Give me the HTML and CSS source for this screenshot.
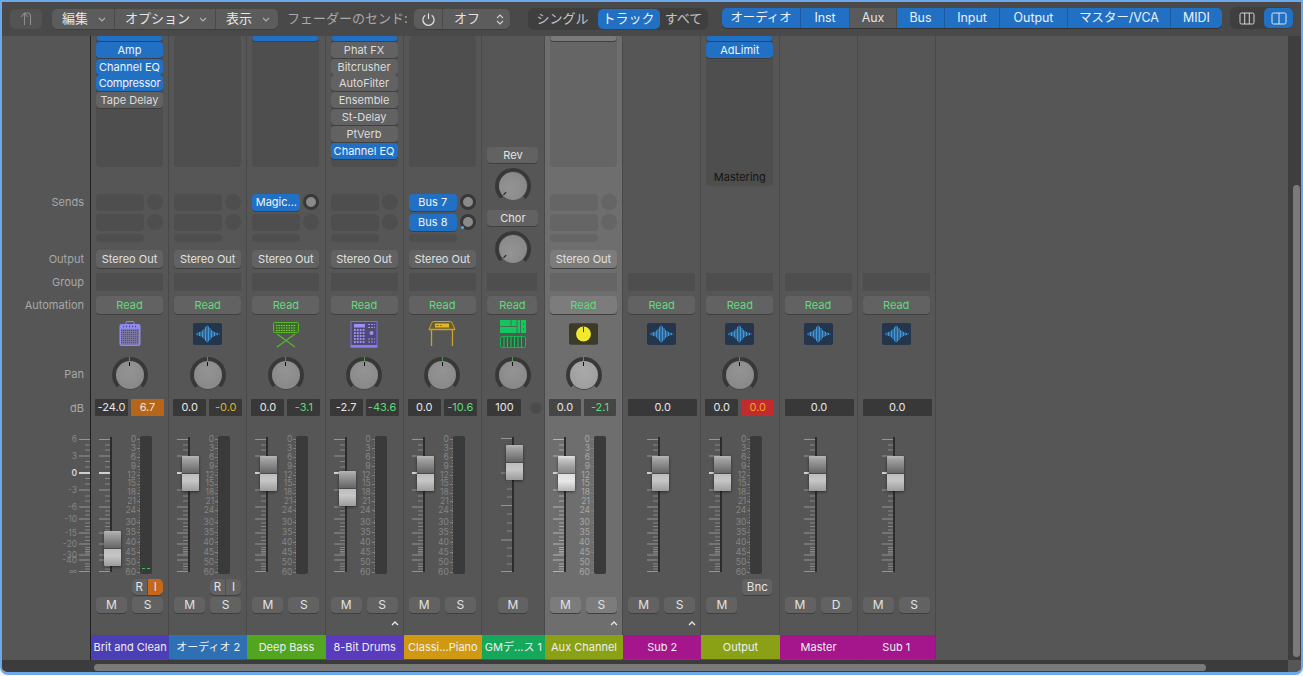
FILE: index.html
```html
<!DOCTYPE html>
<html lang="ja">
<head>
<meta charset="utf-8">
<title>Mixer</title>
<link rel="stylesheet" href="styles.css">
</head>
<body>
<svg class="defs" width="0" height="0" aria-hidden="true">
  <symbol id="ticks" viewBox="0 0 11 148">
    <path d="M0 10.5H11M0 27H11M0 61H11M0 78H11M0 90H11M0 104H11M0 115H11M0 126H11M0 131H11M0 142.5H11" stroke="currentColor" stroke-width="1" fill="none"/>
    <path d="M6 16H11M6 21H11M6 32.5H11M6 38H11M6 49.5H11M6 55H11M6 67H11M6 72H11M6 82H11M6 86H11M6 94H11M6 97.5H11M6 101H11M6 108H11M6 111.5H11M6 118.5H11M6 120.5H11M6 122.5H11M6 124H11M6 135H11M6 137.5H11M6 140H11" stroke="currentColor" stroke-width="1" fill="none" opacity=".8"/>
    <path d="M0 44H11" stroke="#cfcfcf" stroke-width="2"/>
  </symbol>
  <symbol id="ticks-lin" viewBox="0 0 11 148">
    <path d="M0 9.500H11M0 44H11M0 76.500H11M0 111H11M0 142.500H11" stroke="currentColor" stroke-width="1" fill="none"/>
    <path d="M6 18H11M6 27H11M6 35H11M6 52H11M6 60H11M6 68H11M6 85H11M6 94H11M6 102H11M6 119H11M6 127H11M6 135H11" stroke="currentColor" stroke-width="1" fill="none" opacity=".8"/>
  </symbol>
  <symbol id="wave" viewBox="0 0 29 22">
    <rect width="29" height="22" rx="2" fill="#24364d"/>
    <path d="M3.500 10.500v1M5 9.500v3M6.500 9v4M8 8.500v5M9.500 7.500v7M11 6v10M12.500 4v14M14 2.500v17M15.500 3.500v15M17 5v12M18.500 7v8M20 8v6M21.500 9v4M23 9.500v3M24.500 10v2M26 10.500v1" stroke="#3f97dc" stroke-width="1" fill="none"/>
  </symbol>
  <symbol id="chev" viewBox="0 0 8 5">
    <path d="M1 4L4 1L7 4" stroke="currentColor" stroke-width="1.300" fill="none"/>
  </symbol>
  <symbol id="down" viewBox="0 0 8 5">
    <path d="M1 1L4 4L7 1" stroke="currentColor" stroke-width="1.100" fill="none"/>
  </symbol>
</svg>

<div class="window">
  <header class="toolbar">
    <button class="tb-back"><svg width="14" height="16" viewBox="0 0 14 16"><path d="M2 6L5.500 2L9 6M5.500 2V14M5.500 2H8.500Q11.500 2 11.500 5V14" stroke="#8c8c8c" stroke-width="1.100" fill="none"/></svg></button>
    <nav class="menus">
      <div class="menu"><span>編集</span><svg class="caret"><use href="#down"/></svg></div>
      <div class="menu"><span>オプション</span><svg class="caret"><use href="#down"/></svg></div>
      <div class="menu"><span>表示</span><svg class="caret"><use href="#down"/></svg></div>
    </nav>
    <span class="send-label">フェーダーのセンド:</span>
    <div class="power">
      <div class="power-btn"><svg width="15" height="15" viewBox="0 0 15 15"><path d="M7.500 1.500V7M4.300 3.200A5.600 5.600 0 1 0 10.700 3.200" stroke="#e2e2e2" stroke-width="1.200" fill="none"/></svg></div>
      <div class="power-val"><span>オフ</span><svg width="8" height="13" viewBox="0 0 8 13"><path d="M1 5L4 2L7 5M1 8L4 11L7 8" stroke="#cfcfcf" stroke-width="1.100" fill="none"/></svg></div>
    </div>
    <div class="mode">
      <span class="mode-item">シングル</span>
      <span class="mode-item mode-on">トラック</span>
      <span class="mode-item">すべて</span>
    </div>
    <div class="filters">
      <span class="filter">オーディオ</span>
      <span class="filter">Inst</span>
      <span class="filter filter-off">Aux</span>
      <span class="filter">Bus</span>
      <span class="filter">Input</span>
      <span class="filter">Output</span>
      <span class="filter">マスター/VCA</span>
      <span class="filter">MIDI</span>
    </div>
    <div class="views">
      <div class="view"><svg width="16" height="13" viewBox="0 0 16 13"><path d="M2.500 1H13.500Q15 1 15 2.500V10.500Q15 12 13.500 12H2.500Q1 12 1 10.500V2.500Q1 1 2.500 1ZM5.700 1V12M10.300 1V12" stroke="#d6d6d6" fill="none"/></svg></div>
      <div class="view view-on"><svg width="16" height="13" viewBox="0 0 16 13"><path d="M2.500 1H13.500Q15 1 15 2.500V10.500Q15 12 13.500 12H2.500Q1 12 1 10.500V2.500Q1 1 2.500 1ZM8 1V12" stroke="#e6e6e6" fill="none"/></svg></div>
    </div>
  </header>

  <div class="body">
    <div class="left">
      <main class="mixer">
        <aside class="labels">
          <div class="sec-ins"></div>
          <div class="sec-sends lab lab-first">Sends</div>
          <div class="sec-out lab">Output</div>
          <div class="sec-grp lab">Group</div>
          <div class="sec-auto lab">Automation</div>
          <div class="sec-icon"></div>
          <div class="sec-pan lab lab-pan">Pan</div>
          <div class="sec-db lab lab-db">dB</div>
          <div class="sec-fader master-scale">
            <div class="mscale"><span>6</span><span>3</span><span class="bright">0</span><span>-3</span><span>-6</span><span>-10</span><span>-15</span><span>-20</span><span>-30</span><span>-40</span><span>∞</span></div>
            <svg class="ticks"><use href="#ticks"/></svg>
          </div>
        </aside>

        <!-- 1 -->
        <section class="strip">
          <div class="sec-ins"><div class="panel"><div class="plugs">
            <div class="plug on"></div><div class="plug on">Amp</div><div class="plug on">Channel EQ</div><div class="plug on tight">Compressor</div><div class="plug">Tape Delay</div>
          </div></div></div>
          <div class="sec-sends"><div class="send"><i class="slot"></i><i class="dot"></i></div><div class="send"><i class="slot"></i><i class="dot"></i></div><div class="send send-cut"><i class="slot"></i></div></div>
          <div class="sec-out"><div class="btn">Stereo Out</div></div>
          <div class="sec-grp"><div class="group"></div></div>
          <div class="sec-auto"><div class="btn read">Read</div></div>
          <div class="sec-icon">
            <svg class="icon" viewBox="0 0 30 28"><defs><pattern id="grille" width="2" height="2" patternUnits="userSpaceOnUse"><rect width="2" height="2" fill="#77759a"/><rect width="1" height="1" fill="#55536f"/></pattern></defs><path d="M11 4V2.500Q11 1.500 12 1.500H18Q19 1.500 19 2.500V4" stroke="#8f89f2" fill="none"/><rect x="4.500" y="4" width="21" height="22" rx="2" fill="#8f89f2"/><rect x="6" y="9" width="18" height="15.500" fill="url(#grille)"/><path d="M8 6.500h1M11 6.500h1M14 6.500h1M17 6.500h1M20 6.500h1" stroke="#4c4880" stroke-width="1.500"/></svg>
          </div>
          <div class="sec-pan"><div class="knob"><b></b></div></div>
          <div class="sec-db db-row"><div class="db">-24.0</div><div class="db db-orange">6.7</div></div>
          <div class="sec-fader fsec">
            <div class="fader"><svg class="ticks"><use href="#ticks"/></svg><i class="track"></i><div class="cap cap-low"></div></div>
            <div class="scale"><span>0</span><span>3</span><span>6</span><span>9</span><span>12</span><span>15</span><span>18</span><span>21</span><span>24</span><span>30</span><span>35</span><span>40</span><span>45</span><span>50</span><span>60</span></div>
            <div class="meter meter-sig"></div>
          </div>
          <div class="sec-ri"><div class="ri"><span>R</span><span class="ri-on">I</span></div></div>
          <div class="sec-ms"><div class="btn ms">M</div><div class="btn ms">S</div></div>
          <div class="sec-chev"></div>
          <div class="name n-indigo">Brit and Clean</div>
        </section>

        <!-- 2 -->
        <section class="strip">
          <div class="sec-ins"><div class="panel"></div></div>
          <div class="sec-sends"><div class="send"><i class="slot"></i><i class="dot"></i></div><div class="send"><i class="slot"></i><i class="dot"></i></div><div class="send send-cut"><i class="slot"></i></div></div>
          <div class="sec-out"><div class="btn">Stereo Out</div></div>
          <div class="sec-grp"><div class="group"></div></div>
          <div class="sec-auto"><div class="btn read">Read</div></div>
          <div class="sec-icon"><svg class="icon icon-wave"><use href="#wave"/></svg></div>
          <div class="sec-pan"><div class="knob"><b></b></div></div>
          <div class="sec-db db-row"><div class="db">0.0</div><div class="db db-yellow">-0.0</div></div>
          <div class="sec-fader fsec">
            <div class="fader"><svg class="ticks"><use href="#ticks"/></svg><i class="track"></i><div class="cap"></div></div>
            <div class="scale"><span>0</span><span>3</span><span>6</span><span>9</span><span>12</span><span>15</span><span>18</span><span>21</span><span>24</span><span>30</span><span>35</span><span>40</span><span>45</span><span>50</span><span>60</span></div>
            <div class="meter"></div>
          </div>
          <div class="sec-ri"><div class="ri"><span>R</span><span>I</span></div></div>
          <div class="sec-ms"><div class="btn ms">M</div><div class="btn ms">S</div></div>
          <div class="sec-chev"></div>
          <div class="name n-blue">オーディオ 2</div>
        </section>

        <!-- 3 -->
        <section class="strip">
          <div class="sec-ins"><div class="panel"><div class="plugs"><div class="plug on"></div></div></div></div>
          <div class="sec-sends"><div class="send"><i class="slot slot-on">Magic...</i><i class="dot dot-on"></i></div><div class="send"><i class="slot"></i><i class="dot"></i></div><div class="send send-cut"><i class="slot"></i></div></div>
          <div class="sec-out"><div class="btn">Stereo Out</div></div>
          <div class="sec-grp"><div class="group"></div></div>
          <div class="sec-auto"><div class="btn read">Read</div></div>
          <div class="sec-icon">
            <svg class="icon" viewBox="0 0 30 28"><rect x="2.500" y="2.500" width="25" height="10" rx="1" stroke="#58b52c" fill="#3f6e2a"/><path d="M5 5.500h20M5 8h20M5 10.500h20" stroke="#7cc850" stroke-dasharray="1.500 1"/><path d="M6 14L24 27M24 14L6 27" stroke="#58b52c" stroke-width="1.300"/></svg>
          </div>
          <div class="sec-pan"><div class="knob"><b></b></div></div>
          <div class="sec-db db-row"><div class="db">0.0</div><div class="db db-green">-3.1</div></div>
          <div class="sec-fader fsec">
            <div class="fader"><svg class="ticks"><use href="#ticks"/></svg><i class="track"></i><div class="cap"></div></div>
            <div class="scale"><span>0</span><span>3</span><span>6</span><span>9</span><span>12</span><span>15</span><span>18</span><span>21</span><span>24</span><span>30</span><span>35</span><span>40</span><span>45</span><span>50</span><span>60</span></div>
            <div class="meter"></div>
          </div>
          <div class="sec-ri"></div>
          <div class="sec-ms"><div class="btn ms">M</div><div class="btn ms">S</div></div>
          <div class="sec-chev"></div>
          <div class="name n-green">Deep Bass</div>
        </section>

        <!-- 4 -->
        <section class="strip">
          <div class="sec-ins"><div class="panel"><div class="plugs">
            <div class="plug on"></div><div class="plug">Phat FX</div><div class="plug">Bitcrusher</div><div class="plug">AutoFilter</div><div class="plug">Ensemble</div><div class="plug">St-Delay</div><div class="plug">PtVerb</div><div class="plug on">Channel EQ</div>
          </div></div></div>
          <div class="sec-sends"><div class="send"><i class="slot"></i><i class="dot"></i></div><div class="send"><i class="slot"></i><i class="dot"></i></div><div class="send send-cut"><i class="slot"></i></div></div>
          <div class="sec-out"><div class="btn">Stereo Out</div></div>
          <div class="sec-grp"><div class="group"></div></div>
          <div class="sec-auto"><div class="btn read">Read</div></div>
          <div class="sec-icon">
            <svg class="icon" viewBox="0 0 30 28"><rect x="2" y="1.500" width="26" height="25.500" fill="#4f4a72" stroke="#7d6fe0"/><rect x="2" y="25" width="26" height="2.500" fill="#8b7cf0"/><rect x="5" y="4" width="11" height="3.500" fill="#9d90f5"/><path d="M5 10h11M5 13h11M5 16h11M5 19h11M5 22h11" stroke="#9d90f5" stroke-width="1.800" stroke-dasharray="1.800 1.100"/><circle cx="22.500" cy="13" r="2" fill="#9d90f5"/><path d="M19 4.500h7M19 7.500h7M19 19h7M19 22h7" stroke="#9d90f5" stroke-dasharray="2 1"/></svg>
          </div>
          <div class="sec-pan"><div class="knob"><b></b></div></div>
          <div class="sec-db db-row"><div class="db">-2.7</div><div class="db db-green">-43.6</div></div>
          <div class="sec-fader fsec">
            <div class="fader"><svg class="ticks"><use href="#ticks"/></svg><i class="track"></i><div class="cap cap-mid"></div></div>
            <div class="scale"><span>0</span><span>3</span><span>6</span><span>9</span><span>12</span><span>15</span><span>18</span><span>21</span><span>24</span><span>30</span><span>35</span><span>40</span><span>45</span><span>50</span><span>60</span></div>
            <div class="meter"></div>
          </div>
          <div class="sec-ri"></div>
          <div class="sec-ms"><div class="btn ms">M</div><div class="btn ms">S</div></div>
          <div class="sec-chev"><svg class="chev"><use href="#chev"/></svg></div>
          <div class="name n-violet">8-Bit Drums</div>
        </section>

        <!-- 5 -->
        <section class="strip">
          <div class="sec-ins"><div class="panel"></div></div>
          <div class="sec-sends"><div class="send"><i class="slot slot-on">Bus 7</i><i class="dot dot-on"></i></div><div class="send"><i class="slot slot-on">Bus 8</i><i class="dot dot-on dot-mark"></i></div><div class="send send-cut"><i class="slot"></i></div></div>
          <div class="sec-out"><div class="btn">Stereo Out</div></div>
          <div class="sec-grp"><div class="group"></div></div>
          <div class="sec-auto"><div class="btn read">Read</div></div>
          <div class="sec-icon">
            <svg class="icon" viewBox="0 0 30 28"><path d="M4.500 3.500Q5 1.500 7 1.500H23Q25 1.500 25.500 3.500L28 9.500H2Z" fill="#6a5f2e" stroke="#c9a227"/><path d="M2 9.500H28" stroke="#c9a227" stroke-width="1.500"/><rect x="8" y="3.500" width="14" height="4" fill="#e3b52b"/><path d="M9.500 5.500h2M13 5.500h1.500" stroke="#6a5f2e"/><path d="M4.500 10V26M25.500 10V26" stroke="#c9a227" stroke-width="1.300"/></svg>
          </div>
          <div class="sec-pan"><div class="knob"><b></b></div></div>
          <div class="sec-db db-row"><div class="db">0.0</div><div class="db db-green">-10.6</div></div>
          <div class="sec-fader fsec">
            <div class="fader"><svg class="ticks"><use href="#ticks"/></svg><i class="track"></i><div class="cap"></div></div>
            <div class="scale"><span>0</span><span>3</span><span>6</span><span>9</span><span>12</span><span>15</span><span>18</span><span>21</span><span>24</span><span>30</span><span>35</span><span>40</span><span>45</span><span>50</span><span>60</span></div>
            <div class="meter"></div>
          </div>
          <div class="sec-ri"></div>
          <div class="sec-ms"><div class="btn ms">M</div><div class="btn ms">S</div></div>
          <div class="sec-chev"></div>
          <div class="name n-amber">Classi...Piano</div>
        </section>

        <!-- 6 -->
        <section class="strip strip-gm">
          <div class="gm-sends">
            <div class="btn">Rev</div>
            <div class="knob knob-min"><b></b></div>
            <div class="btn">Chor</div>
            <div class="knob knob-min"><b></b></div>
          </div>
          <div class="sec-grp"><div class="group"></div></div>
          <div class="sec-auto"><div class="btn read">Read</div></div>
          <div class="sec-icon">
            <svg class="icon" viewBox="0 0 30 28"><rect x="2" y="0" width="26" height="13" fill="#12c85c"/><path d="M2 6.500H19M13 0V6.500M19 0V13M22.500 0V13M25.500 3V4.500M25.500 8V9.500" stroke="#4b6b55" stroke-width="1"/><rect x="2.500" y="16.500" width="25" height="11" rx="1.500" fill="#3b5a46" stroke="#12b554"/><path d="M6 17V27M9.500 17V27M13 17V27M16.500 17V27M20 17V27M23.500 17V27" stroke="#17c15b" stroke-width="1.100"/></svg>
          </div>
          <div class="sec-pan"><div class="knob"><b></b></div></div>
          <div class="sec-db db-row"><div class="db">100</div><i class="db-led"></i></div>
          <div class="sec-fader fsec fsec-gm">
            <div class="fader"><svg class="ticks"><use href="#ticks-lin"/></svg><i class="track"></i><div class="cap cap-high"></div></div>
          </div>
          <div class="sec-ri"></div>
          <div class="sec-ms"><div class="btn ms ms-gm">M</div></div>
          <div class="sec-chev"></div>
          <div class="name n-emerald">GMデ...ス 1</div>
        </section>

        <!-- 7 -->
        <section class="strip strip-sel">
          <div class="sec-ins"><div class="panel"><div class="plugs"><div class="plug"></div></div></div></div>
          <div class="sec-sends"><div class="send"><i class="slot"></i><i class="dot"></i></div><div class="send"><i class="slot"></i><i class="dot"></i></div><div class="send send-cut"><i class="slot"></i></div></div>
          <div class="sec-out"><div class="btn">Stereo Out</div></div>
          <div class="sec-grp"><div class="group"></div></div>
          <div class="sec-auto"><div class="btn read">Read</div></div>
          <div class="sec-icon">
            <svg class="icon icon-wave" viewBox="0 0 30 22"><rect width="30" height="22" rx="2" fill="#3b3b27"/><circle cx="15" cy="11" r="7.700" fill="#f0e92f"/><path d="M15 3.500V9" stroke="#333" stroke-width="1"/></svg>
          </div>
          <div class="sec-pan"><div class="knob"><b></b></div></div>
          <div class="sec-db db-row"><div class="db">0.0</div><div class="db db-green">-2.1</div></div>
          <div class="sec-fader fsec">
            <div class="fader"><svg class="ticks"><use href="#ticks"/></svg><i class="track"></i><div class="cap"></div></div>
            <div class="scale"><span>0</span><span>3</span><span>6</span><span>9</span><span>12</span><span>15</span><span>18</span><span>21</span><span>24</span><span>30</span><span>35</span><span>40</span><span>45</span><span>50</span><span>60</span></div>
            <div class="meter"></div>
          </div>
          <div class="sec-ri"></div>
          <div class="sec-ms"><div class="btn ms">M</div><div class="btn ms">S</div></div>
          <div class="sec-chev"><svg class="chev"><use href="#chev"/></svg></div>
          <div class="name n-olive">Aux Channel</div>
        </section>

        <!-- 8 -->
        <section class="strip">
          <div class="sec-ins"></div>
          <div class="sec-sends"></div>
          <div class="sec-out"></div>
          <div class="sec-grp"><div class="group"></div></div>
          <div class="sec-auto"><div class="btn read">Read</div></div>
          <div class="sec-icon"><svg class="icon icon-wave"><use href="#wave"/></svg></div>
          <div class="sec-pan"></div>
          <div class="sec-db db-row"><div class="db db-wide">0.0</div></div>
          <div class="sec-fader fsec fsec-solo">
            <div class="fader"><svg class="ticks"><use href="#ticks"/></svg><i class="track"></i><div class="cap"></div></div>
          </div>
          <div class="sec-ri"></div>
          <div class="sec-ms"><div class="btn ms">M</div><div class="btn ms">S</div></div>
          <div class="sec-chev"><svg class="chev"><use href="#chev"/></svg></div>
          <div class="name n-magenta">Sub 2</div>
        </section>

        <!-- 9 -->
        <section class="strip">
          <div class="sec-ins"><div class="panel panel-long"><div class="plugs"><div class="plug on"></div><div class="plug on">AdLimit</div></div><span class="mastering">Mastering</span></div></div>
          <div class="sec-sends"></div>
          <div class="sec-out"></div>
          <div class="sec-grp"><div class="group"></div></div>
          <div class="sec-auto"><div class="btn read">Read</div></div>
          <div class="sec-icon"><svg class="icon icon-wave"><use href="#wave"/></svg></div>
          <div class="sec-pan"><div class="knob"><b></b></div></div>
          <div class="sec-db db-row"><div class="db">0.0</div><div class="db db-red">0.0</div></div>
          <div class="sec-fader fsec">
            <div class="fader"><svg class="ticks"><use href="#ticks"/></svg><i class="track"></i><div class="cap"></div></div>
            <div class="scale"><span>0</span><span>3</span><span>6</span><span>9</span><span>12</span><span>15</span><span>18</span><span>21</span><span>24</span><span>30</span><span>35</span><span>40</span><span>45</span><span>50</span><span>60</span></div>
            <div class="meter"></div>
          </div>
          <div class="sec-ri sec-bnc"><div class="btn bnc">Bnc</div></div>
          <div class="sec-ms"><div class="btn ms">M</div></div>
          <div class="sec-chev"></div>
          <div class="name n-olive">Output</div>
        </section>

        <!-- 10 -->
        <section class="strip">
          <div class="sec-ins"></div>
          <div class="sec-sends"></div>
          <div class="sec-out"></div>
          <div class="sec-grp"><div class="group"></div></div>
          <div class="sec-auto"><div class="btn read">Read</div></div>
          <div class="sec-icon"><svg class="icon icon-wave"><use href="#wave"/></svg></div>
          <div class="sec-pan"></div>
          <div class="sec-db db-row"><div class="db db-wide">0.0</div></div>
          <div class="sec-fader fsec fsec-solo">
            <div class="fader"><svg class="ticks"><use href="#ticks"/></svg><i class="track"></i><div class="cap"></div></div>
          </div>
          <div class="sec-ri"></div>
          <div class="sec-ms"><div class="btn ms">M</div><div class="btn ms">D</div></div>
          <div class="sec-chev"></div>
          <div class="name n-magenta">Master</div>
        </section>

        <!-- 11 -->
        <section class="strip">
          <div class="sec-ins"></div>
          <div class="sec-sends"></div>
          <div class="sec-out"></div>
          <div class="sec-grp"><div class="group"></div></div>
          <div class="sec-auto"><div class="btn read">Read</div></div>
          <div class="sec-icon"><svg class="icon icon-wave"><use href="#wave"/></svg></div>
          <div class="sec-pan"></div>
          <div class="sec-db db-row"><div class="db db-wide">0.0</div></div>
          <div class="sec-fader fsec fsec-solo">
            <div class="fader"><svg class="ticks"><use href="#ticks"/></svg><i class="track"></i><div class="cap"></div></div>
          </div>
          <div class="sec-ri"></div>
          <div class="sec-ms"><div class="btn ms">M</div><div class="btn ms">S</div></div>
          <div class="sec-chev"></div>
          <div class="name n-magenta">Sub 1</div>
        </section>
      </main>
      <div class="hscroll"><div class="hthumb"></div></div>
    </div>
    <div class="vscroll"><div class="vtrack"><div class="vthumb"></div></div><div class="corner"></div></div>
  </div>
</div>
</body>
</html>
```
FILE: styles.css
```css
* { box-sizing: border-box; }
html, body { margin: 0; padding: 0; background: #f4f6f8; overflow: hidden; }
body { width: 1303px; height: 676px; font-family: Inter, "Noto Sans CJK JP", sans-serif; color: #e2e2e2; }
.defs { position: absolute; }
button { font: inherit; color: inherit; padding: 0; border: 0; }

.window {
  width: 1303px; height: 675px;
  border: solid #6ca8ea; border-width: 2px 2px 3px 2px;
  border-radius: 0 0 8px 8px;
  background: #4a4a4a;
  display: flex; flex-direction: column;
  overflow: hidden;
}

/* toolbar */
.toolbar {
  height: 34px; flex: none; background: #494949;
  display: flex; align-items: center; padding-left: 8px;
  font-family: "Noto Sans CJK JP", Inter, sans-serif;
  font-size: 13px;
}
.tb-back { width: 32px; height: 20px; background: #535353; border-radius: 5px; display: flex; align-items: center; justify-content: center; }
.menus { margin-left: 10px; width: 226px; height: 20px; display: grid; grid-template-columns: 63px 101px 62px; background: #5c5c5c; border-radius: 5px; box-shadow: 0 1px 0 #3d3d3d; }
.menu { display: flex; align-items: center; justify-content: space-between; padding: 0 8px 0 10px; border-right: 1px solid #4a4a4a; color: #e6e6e6; }
.menu span, .power-val span { line-height: 18px; margin-top: -3px; }
.menu:last-child { border-right: 0; }
.caret { width: 8px; height: 5px; color: #b0b0b0; }
.send-label { margin: -3px 0 0 9px; width: 123px; color: #a9a9a9; font-size: 13px; white-space: nowrap; }
.power { margin-left: 4px; width: 96px; height: 20px; display: grid; grid-template-columns: 29px 67px; background: #5c5c5c; border-radius: 5px; box-shadow: 0 1px 0 #3d3d3d; }
.power-btn { display: flex; align-items: center; justify-content: center; border-right: 1px solid #4a4a4a; }
.power-val { display: flex; align-items: center; justify-content: space-between; padding: 0 6px 0 11px; }
.mode { margin-left: 17.5px; width: 180px; height: 22px; background: #3f3f3f; border-radius: 6px; display: grid; grid-template-columns: 70px 62px 48px; align-items: center; justify-items: center; color: #c4c4c4; font-size: 13px; }
.mode-item { height: 20px; line-height: 17px; white-space: nowrap; }
.mode-on { width: 62px; background: #2270c4; color: #f0f0f0; border-radius: 5px; text-align: center; }
.filters { margin: 0 0 2px 14.5px; width: 500px; height: 20px; display: grid; grid-template-columns: 79px 49px 47px 48px 55px 68px 103px 51px; background: #2270c4; border-radius: 5px; box-shadow: 0 1px 0 #333; font-size: 12.4px; }
.filter { display: flex; align-items: center; justify-content: center; padding-bottom: 2px; border-right: 1px solid #1c5ba2; color: #eef2f6; white-space: nowrap; font-family: Inter, "Noto Sans CJK JP", sans-serif; }
.filter:last-child { border-right: 0; }
.filter-off { background: #5a5a5a; color: #e2e2e2; border-right-color: #4a4a4a; }
.views { margin: 0 0 2px 8px; width: 63px; height: 22px; background: #3f3f3f; border-radius: 6px; display: grid; grid-template-columns: 34px 29px; }
.view { display: flex; align-items: center; justify-content: center; }
.view-on { background: #2270c4; border-radius: 5px; margin: 1px 0; }

/* frame */
.body { flex: 1; display: flex; min-height: 0; }
.left { width: 1286px; display: flex; flex-direction: column; }
.mixer { height: 624px; display: flex; background: #565656; overflow: hidden; }
.hscroll { height: 12px; background: #3c3c3c; padding: 4px 0 1px 92px; }
.hthumb { width: 1112px; height: 7px; border-radius: 4px; background: #7a7a7a; }
.vscroll { width: 13px; display: flex; flex-direction: column; }
.vtrack { height: 624px; background: #3e3e3e; padding: 149px 1px 3px 5px; }
.vthumb { height: 472px; border-radius: 4px; background: #7a7a7a; }
.corner { height: 12px; background: #565656; }

/* rows */
.sec-ins { height: 158px; flex: none; }
.sec-sends { height: 56px; flex: none; }
.sec-out, .sec-grp, .sec-auto { height: 23px; flex: none; }
.sec-icon { height: 36px; flex: none; }
.sec-pan { height: 42px; flex: none; padding-top: 2px; }
.sec-db { height: 32px; flex: none; }
.sec-fader { height: 148px; flex: none; }
.sec-ri { height: 20px; flex: none; padding-top: 2px; }
.sec-ms { height: 21px; flex: none; }
.sec-chev { height: 17px; flex: none; }

/* label column */
.labels { width: 89px; flex: none; border-right: 1px solid #1d1d1d; font-size: 11px; color: #a8a8a8; }
.lab { text-align: right; padding-right: 6px; line-height: 18px; }
.lab-first { line-height: 17px; }
.lab-pan { padding-top: 10px; }
.lab-db { padding-top: 2px; }
.master-scale { display: flex; justify-content: flex-end; }
.mscale { width: 77px; padding: 10px 2px 0 0; font-size: 8.500px; color: #858585; }
.mscale span { display: block; height: 17px; line-height: 0; text-align: right; }
.mscale span:nth-child(5) { height: 12px; }
.mscale span:nth-child(6) { height: 14px; }
.mscale span:nth-child(7), .mscale span:nth-child(8) { height: 11px; }
.mscale span:nth-child(9) { height: 5px; }
.mscale span:nth-child(10) { height: 11px; }
.mscale .bright { color: #d8d8d8; font-weight: 600; }
.ticks { width: 11px; height: 148px; flex: none; color: #949494; }

/* strip */
.strip { width: 78.200px; flex: none; display: flex; flex-direction: column; border-right: 1px solid #494949; background: #565656; }
.strip-gm { width: 63px; }
.strip-sel { background: #6e6e6e; }

.panel { margin-left: 5px; width: 67px; height: 131px; background: #4e4e4e; border-radius: 4px; overflow: hidden; position: relative; }
.panel-long { height: 150px; }
.strip-sel .panel { background: #656565; }
.plugs { margin-top: -11px; display: flex; flex-direction: column; gap: .8px; }
.plug { height: 16px; flex: none; background: #626262; border-radius: 4px; box-shadow: 0 1px 0 #3f3f3f; text-align: center; font-size: 11px; line-height: 16px; color: #dcdcdc; white-space: nowrap; }
.plug.on { background: #2270c4; color: #f0f4f8; }
.plug.tight { letter-spacing: -.2px; }
.strip-sel .plug { background: #7a7a7a; }
.mastering { position: absolute; left: 0; right: 0; bottom: 2px; text-align: center; font-size: 11px; color: #141414; }

.send { display: flex; height: 20px; margin-left: 5px; width: 67px; justify-content: space-between; }
.send-cut { height: 16px; }
.slot { width: 48px; height: 17px; background: #4e4e4e; border-radius: 4px; font-style: normal; font-size: 11px; line-height: 17px; text-align: center; color: #f0f4f8; white-space: nowrap; }
.send-cut .slot { height: 8px; }
.dot { width: 16px; height: 16px; background: #4e4e4e; border-radius: 50%; position: relative; }
.slot-on { background: #2270c4; box-shadow: 0 1px 0 #3f3f3f; }
.dot-on { background: #8a8a8a; border: 3px solid #383838; }
.dot-mark::after { content: ""; position: absolute; left: -2px; bottom: -2px; width: 3px; height: 3px; border-radius: 50%; background: #58a4ee; }
.strip-sel .slot, .strip-sel .dot { background: #656565; }

.btn { margin-left: 5px; width: 67px; height: 18px; background: #626262; border-radius: 4px; box-shadow: 0 1px 0 #3f3f3f; text-align: center; font-size: 11px; line-height: 18px; color: #e2e2e2; white-space: nowrap; }
.strip-sel .btn { background: #7c7c7c; }
.read { color: #62da7e; }
.group { margin-left: 5px; width: 67px; height: 18px; background: #4e4e4e; border-radius: 1px; }
.strip-sel .group { background: #656565; }

.icon { display: block; width: 30px; height: 28px; margin: 1px auto 0; }
.icon-wave { width: 29px; height: 22px; margin-top: 4px; }

.knob { width: 36px; height: 36px; margin: 0 auto; border-radius: 50%; background: conic-gradient(from -135deg, #383838 0 270deg, transparent 270deg); display: flex; align-items: center; justify-content: center; position: relative; }
.knob::before { content: ""; position: absolute; left: 17.500px; top: 0; width: 1px; height: 4px; background: #4e9a5e; }
.knob b { display: block; width: 28px; height: 28px; border-radius: 50%; background: radial-gradient(circle at 50% 35%, #949494, #858585); position: relative; box-shadow: 0 1px 0 #4a4a4a; }
.knob b::after { content: ""; position: absolute; left: 13.500px; top: 1px; width: 1px; height: 4px; background: #111; }
.strip-sel .knob b { background: radial-gradient(circle at 50% 35%, #aaa, #9a9a9a); }
.knob-min::before { display: none; }
.knob-min b { transform: rotate(-135deg); }

.gm-sends { height: 237px; flex: none; padding-top: 111px; display: flex; flex-direction: column; align-items: center; }
.gm-sends .btn { margin: 0; width: 51px; height: 16px; line-height: 16px; }
.gm-sends .knob { margin: 5px 0 6px; flex: none; }
.strip-gm .group, .strip-gm .sec-auto .btn { width: 50px; }
.strip-gm .group, .strip-gm .sec-auto .btn { margin-left: 5.500px; }

.db-row { display: flex; gap: 3px; padding: 2px 0 0 4px; }
.db { width: 33px; height: 17px; background: #383838; text-align: center; font-size: 11px; line-height: 17px; color: #e6e6e6; border-radius: 1px; }
.db-orange { background: #b5661b; color: #f2e2d2; }
.db-yellow { color: #d8b32a; }
.db-green { color: #5bdc7a; }
.db-red { background: #c32a2e; color: #f3a320; }
.db-wide { width: 69px; margin-left: 1px; }
.db-led { width: 12px; height: 12px; border-radius: 50%; background: #4c4c4c; margin: 3px 0 0 6px; }
.strip-gm .db-row { padding-left: 5.500px; }
.strip-gm .db { width: 34px; }
.strip-sel .db { background: #454545; width: 32px; }

/* fader */
.fsec { display: flex; padding-left: 8px; }
.fsec-solo { padding-left: 24px; }
.fsec-gm { padding-left: 19px; }
.fader { width: 26px; height: 148px; display: flex; position: relative; flex: none; }
.track { width: 2px; height: 135px; margin-top: 8px; background: #2c2c2c; }
.cap {
  position: absolute; left: 5px; top: 27px; width: 17px; height: 35px; border-radius: 1px;
  background: linear-gradient(to bottom, #b8b8b8 0, #a4a4a4 8%, #858585 28%, #666 48%, #4a4a4a 49%, #4a4a4a 51%, #bdbdbd 52%, #c6c6c6 70%, #9c9c9c 100%);
  box-shadow: 0 1px 3px rgba(0,0,0,.5);
}
.cap-low { top: 102px; }
.cap-mid { top: 42px; }
.cap-high { top: 16px; }
.strip-sel .cap { background: linear-gradient(to bottom, #e4e4e4 0, #c4c4c4 10%, #a0a0a0 30%, #888 48%, #666 49%, #666 51%, #e0e0e0 52%, #e6e6e6 72%, #b4b4b4 100%); }
.strip-sel .ticks { color: #b4b4b4; }
.scale {
  width: 15px; height: 148px; flex: none; padding-top: 10px; font-size: 8.500px; color: #858585;
  background: repeating-linear-gradient(to bottom, #808080 0 1px, transparent 1px 3px) no-repeat right 0 top 10px / 1px 132px;
}
.scale span { display: block; height: 8.900px; line-height: 0; text-align: right; white-space: nowrap; }
.scale span::after { content: ""; display: inline-block; width: 3px; height: 1px; background: #808080; margin-left: 1px; vertical-align: middle; }
.scale span:nth-child(9) { height: 11.600px; }
.scale span:nth-child(n+10) { height: 10px; }
.strip-sel .scale { color: #a6a6a6; }
.meter { width: 12px; height: 138px; margin-top: 7px; background: #3a3a3a; border-radius: 2px; flex: none; position: relative; }
.meter-sig::after { content: ""; position: absolute; left: 2px; bottom: 5px; width: 8px; height: 1px; background: repeating-linear-gradient(to right, #3fc25f 0 3px, transparent 3px 5px); }

.ri { margin-left: 41px; width: 31px; height: 16px; display: grid; grid-template-columns: 1fr 1fr; background: #626262; border-radius: 5px; box-shadow: 0 1px 0 #3f3f3f; overflow: hidden; font-size: 11.500px; line-height: 16px; text-align: center; color: #e6e6e6; }
.ri span:first-child { border-right: 1px solid #505050; }
.ri-on { background: #c5681a; }
.sec-bnc { display: flex; }
.bnc { margin-left: 41px; width: 30px; height: 16px; line-height: 16px; font-size: 11.500px; }
.sec-ms { display: flex; gap: 5px; padding-left: 5px; }
.sec-ms .ms { margin: 0; width: 31px; height: 16px; font-size: 12px; line-height: 16px; }
.sec-ms .ms-gm { margin-left: 11px; width: 30px; }
.sec-chev { position: relative; }
.chev { position: absolute; left: 65px; top: 3px; width: 8px; height: 5px; color: #e8e8e8; }

.name { height: 24px; flex: none; margin-right: -1px; text-align: center; font-size: 11px; line-height: 24px; white-space: nowrap; color: #eef0f2; overflow: hidden; }
.strip:last-child .name { margin-right: 0; }
.n-indigo { background: #4a3fb5; }
.n-blue { background: #2f6fb3; }
.n-green { background: #52a51f; }
.n-violet { background: #5a3bbd; }
.n-amber { background: #cf9a12; }
.n-emerald { background: #16a85a; }
.n-olive { background: #8aa116; }
.n-magenta { background: #a5168c; }
```
